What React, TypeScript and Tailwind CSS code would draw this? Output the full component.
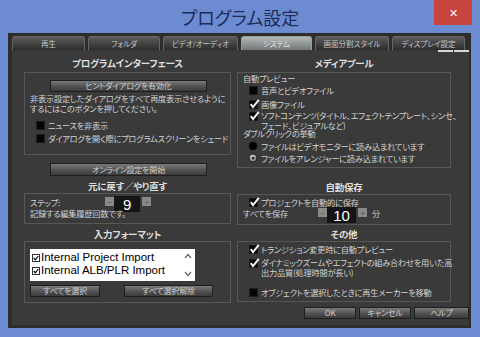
import React from "react";

function Box({ on }: { on?: boolean }) {
  return (
    <svg width="12" height="10" viewBox="0 0 12 10" className="shrink-0">
      <rect x="0.5" y="1.5" width="8" height="8" fill="#050505" stroke="#1c1c1c" />
      {on && <path d="M1.8 5.2 L4 8.2 L9.8 0.8" stroke="#f4f4f4" strokeWidth="2" fill="none" />}
    </svg>
  );
}

function Radio({ on }: { on?: boolean }) {
  return (
    <svg width="10" height="10" viewBox="0 0 10 10" className="shrink-0">
      <defs>
        <radialGradient id="rg" cx="40%" cy="35%" r="60%">
          <stop offset="0%" stopColor="#e8e8e8" />
          <stop offset="100%" stopColor="#777" />
        </radialGradient>
      </defs>
      <circle cx="5" cy="5" r="4" fill={on ? "url(#rg)" : "#000"} stroke="#111" strokeWidth="0.8" />
      {on && <circle cx="5" cy="5" r="1.6" fill="#333" />}
    </svg>
  );
}

function Btn({ label, className }: { label: string; className: string }) {
  return (
    <div
      className={
        "flex items-center justify-center whitespace-nowrap border border-[#1e1e1e] bg-gradient-to-b from-[#7a7a7a] via-[#555] to-[#3a3a3a] text-[8px] text-[#cfcfcf] leading-none " +
        className
      }
    >
      {label}
    </div>
  );
}

function Spin({ value, w }: { value: string; w: string }) {
  return (
    <div className="flex items-start">
      <div className="mt-[1px] flex h-[9px] w-[9px] items-center justify-center bg-[#8a8a8a] text-[8px] leading-none text-[#555]">−</div>
      <div className={"flex h-[16px] items-center justify-center bg-[#141414] font-['Liberation_Sans',sans-serif] text-[15px] leading-none text-white " + w}>
        {value}
      </div>
      <div className="mt-[1px] ml-[2px] flex h-[9px] w-[9px] items-center justify-center bg-[#8a8a8a] text-[8px] leading-none text-[#555]">+</div>
    </div>
  );
}

function Title({ text, className }: { text: string; className?: string }) {
  return (
    <div className={"flex h-[12px] items-center justify-center whitespace-nowrap text-[9.5px] font-bold leading-none text-[#dedede] " + (className ?? "")}>
      {text}
    </div>
  );
}

const tabs = [
  { t: "再生", w: "w-[73px]" },
  { t: "フォルダ", w: "w-[72px]" },
  { t: "ビデオ/オーディオ", w: "w-[75px]" },
  { t: "システム", w: "w-[71px]", active: true },
  { t: "画面分割スタイル", w: "w-[74px]" },
  { t: "ディスプレイ設定", w: "w-[73px]" },
];

export default function App() {
  return (
    <div className="relative h-[337px] w-[480px] overflow-hidden bg-[#6d8bd1] font-['Noto_Sans_CJK_JP',sans-serif] [font-feature-settings:'palt'] text-[#d2d2d2]">
      {/* title bar */}
      <div className="flex h-[33px] items-center justify-center pt-[1px] text-[18px] leading-none text-[#1c2b5a]">
        プログラム設定
      </div>
      <div className="absolute right-[8px] top-0 flex h-[25px] w-[38px] items-center justify-center bg-[#c8443f] text-[11px] text-white">
        ✕
      </div>

      {/* frame */}
      <div className="ml-[8px] flex h-[295px] w-[463px] flex-col bg-[#2d2d2d] px-[4px] pt-[3px]">
        <div className="flex h-[14px] gap-[3px]">
          {tabs.map((tab) => (
            <div
              key={tab.t}
              className={
                "flex items-center justify-center whitespace-nowrap rounded-t-[3px] border border-b-0 text-[7.5px] leading-none " +
                tab.w +
                (tab.active
                  ? " border-[#9aa0a0] bg-gradient-to-b from-[#b4baba] to-[#727878] text-[#e2e2e2]"
                  : " border-[#666] bg-gradient-to-b from-[#5c5c5c] to-[#2c2c2c] text-[#c4c4c4]")
              }
            >
              {tab.t}
            </div>
          ))}
        </div>

        {/* content */}
        <div className="relative flex h-[275px] w-[457px] whitespace-nowrap bg-[#3a3a3a] text-[8.2px] leading-[9px] tracking-[-0.2px]">
          <div className="absolute right-[0px] top-[0px] flex gap-[1px]">
            <div className="h-[2px] w-[15px] bg-[#d8d8d8]" />
            <div className="h-[2px] w-[15px] bg-[#d8d8d8]" />
          </div>

          {/* left column */}
          <div className="flex w-[225px] flex-col pt-[8px]">
            <Title text="プログラムインターフェース" className="ml-[12px] w-[207px]" />
            <div className="ml-[12px] mt-[2px] flex h-[83px] w-[207px] flex-col border border-[#575757] pt-[7px]">
              <Btn label="ヒントダイアログを有効化" className="ml-[25px] h-[12px] w-[157px]" />
              <div className="mt-[2px] pl-[5px] leading-[9.5px]">
                <div>非表示設定したダイアログをすべて再度表示させるように</div>
                <div>するにはこのボタンを押してください。</div>
              </div>
              <div className="mt-[7px] flex items-center pl-[11px]">
                <Box />
                <span>ニュースを非表示</span>
              </div>
              <div className="mt-[3px] flex items-center pl-[11px]">
                <Box />
                <span>ダイアログを開く際にプログラムスクリーンをシェード</span>
              </div>
            </div>
            <Btn label="オンライン設定を開始" className="ml-[38px] mt-[8px] h-[13px] w-[157px]" />
            <Title text="元に戻す／やり直す" className="ml-[12px] mt-[5px] w-[207px]" />
            <div className="ml-[12px] flex h-[31px] w-[207px] flex-col border border-[#575757] pl-[5px] pt-[2px]">
              <div className="flex h-[16px] items-start">
                <div className="mt-[2px] w-[75px]">ステップ:</div>
                <Spin value="9" w="w-[26px]" />
              </div>
              <div className="-mt-[3px]">記録する編集履歴回数です。</div>
            </div>
            <Title text="入力フォーマット" className="ml-[12px] mt-[5px] w-[207px]" />
            <div className="ml-[12px] flex h-[62px] w-[207px] flex-col border border-[#575757] pl-[5px] pt-[7px]">
              <div className="flex h-[32px] w-[165px] bg-white font-['Liberation_Sans',sans-serif] text-[11.5px] leading-[13px] tracking-normal text-black">
                <div className="flex flex-1 flex-col pl-[2px] pt-[2px]">
                  {["Internal Project Import", "Internal ALB/PLR Import"].map((s) => (
                    <div key={s} className="flex items-center gap-[1px]">
                      <svg width="8" height="8" viewBox="0 0 8 8" className="shrink-0">
                        <rect x="0.5" y="0.5" width="7" height="7" fill="#fff" stroke="#333" />
                        <path d="M1.8 4 L3.3 5.8 L6.3 2" stroke="#000" strokeWidth="1.2" fill="none" />
                      </svg>
                      <span>{s}</span>
                    </div>
                  ))}
                </div>
                <div className="flex w-[14px] flex-col items-center justify-between py-[4px]">
                  <svg width="8" height="6" viewBox="0 0 8 6">
                    <path d="M1 5 L4 1.5 L7 5" stroke="#666" strokeWidth="1.2" fill="none" />
                  </svg>
                  <svg width="8" height="6" viewBox="0 0 8 6">
                    <path d="M1 1 L4 4.5 L7 1" stroke="#666" strokeWidth="1.2" fill="none" />
                  </svg>
                </div>
              </div>
              <div className="mt-[4px] flex">
                <Btn label="すべてを選択" className="h-[12px] w-[70px]" />
                <Btn label="すべて選択解除" className="ml-[24px] h-[12px] w-[89px]" />
              </div>
            </div>
          </div>

          {/* right column */}
          <div className="flex w-[232px] flex-col pt-[8px]">
            <Title text="メディアプール" className="w-[214px]" />
            <div className="mt-[2px] flex h-[96px] w-[214px] flex-col border border-[#575757] pl-[5px] pt-[1px]">
              <div>自動プレビュー</div>
              <div className="mt-[2px] flex items-center pl-[6px]">
                <Box />
                <span>音声とビデオファイル</span>
              </div>
              <div className="mt-[4px] flex items-center pl-[6px]">
                <Box on />
                <span>画像ファイル</span>
              </div>
              <div className="mt-[2px] flex items-start pl-[6px]">
                <Box on />
                <div className="flex flex-col leading-[9.5px]">
                  <span>ソフトコンテンツ(タイトル、エフェクトテンプレート、シンセ、</span>
                  <span>フェード、ビジュアルなど)</span>
                </div>
              </div>
              <div className="-mt-[1px]">ダブルクリックの挙動</div>
              <div className="mt-[3px] flex items-center gap-[3px] pl-[5px]">
                <Radio />
                <span>ファイルはビデオモニターに読み込まれています</span>
              </div>
              <div className="mt-[2px] flex items-center gap-[3px] pl-[5px]">
                <Radio on />
                <span>ファイルをアレンジャーに読み込まれています</span>
              </div>
            </div>
            <Title text="自動保存" className="mt-[14px] w-[214px]" />
            <div className="flex h-[31px] w-[214px] flex-col border border-[#575757] pl-[5px] pt-[2px]">
              <div className="flex items-center pl-[6px]">
                <Box on />
                <span>プロジェクトを自動的に保存</span>
              </div>
              <div className="flex h-[16px] items-start">
                <div className="mt-[2px] w-[75px]">すべてを保存</div>
                <Spin value="10" w="w-[29px]" />
                <div className="ml-[5px] mt-[2px]">分</div>
              </div>
            </div>
            <Title text="その他" className="mt-[4px] w-[214px]" />
            <div className="flex h-[61px] w-[214px] flex-col border border-[#575757] pl-[5px] pt-[2px]">
              <div className="flex items-center pl-[6px]">
                <Box on />
                <span>トランジション変更時に自動プレビュー</span>
              </div>
              <div className="mt-[4px] flex items-start pl-[6px]">
                <Box on />
                <div className="flex flex-col leading-[9.5px]">
                  <span>ダイナミックズームやエフェクトの組み合わせを用いた高</span>
                  <span>出力品質(処理時間が長い)</span>
                </div>
              </div>
              <div className="mt-[10px] flex items-center pl-[6px]">
                <Box />
                <span>オブジェクトを選択したときに再生メーカーを移動</span>
              </div>
            </div>
            <div className="mt-[5px] flex justify-end gap-[3px]">
              <Btn label="OK" className="h-[12px] w-[52px]" />
              <Btn label="キャンセル" className="h-[12px] w-[52px]" />
              <Btn label="ヘルプ" className="h-[12px] w-[55px]" />
            </div>
          </div>
        </div>
      </div>
    </div>
  );
}
